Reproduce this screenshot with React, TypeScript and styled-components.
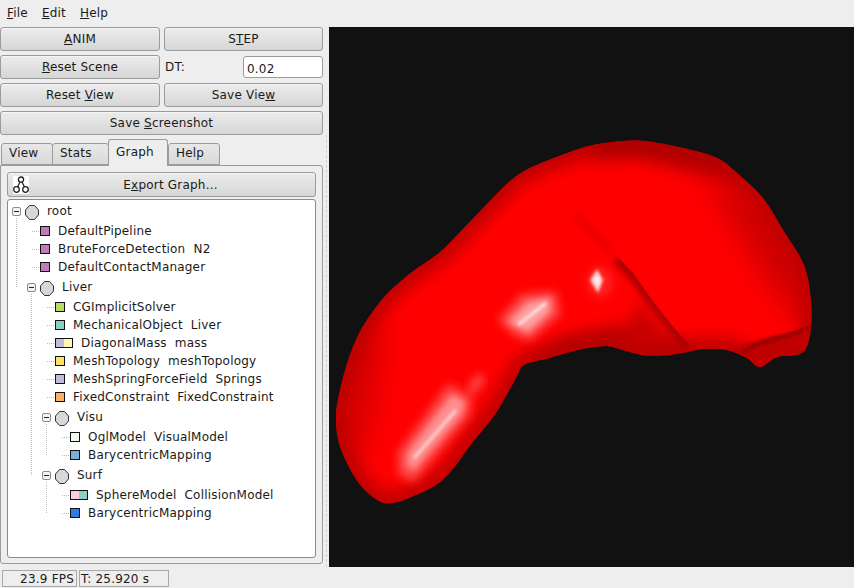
import React from 'react';
import styled, { createGlobalStyle } from 'styled-components';

const GlobalStyle = createGlobalStyle`
    html, body {
        margin: 0;
        padding: 0;
        background-color: #eeeeee;
    }
    body {
        font-family: "DejaVu Sans", sans-serif;
        font-size: 12px;
        letter-spacing: 0.2px;
        color: #1a1a1a;
    }
`;

const Window = styled.div`
    width: 854px;
    height: 588px;
    display: flex;
    flex-direction: column;
    overflow: hidden;
`;

const MenuBar = styled.div`
    height: 27px;
    display: flex;
    gap: 14px;
    padding: 6px 0 0 7px;
    box-sizing: border-box;
    line-height: 15px;
`;

const Main = styled.div`
    height: 540px;
    display: flex;
`;

const SidePanel = styled.div`
    width: 323px;
    display: flex;
    flex-direction: column;
`;

const Splitter = styled.div`
    width: 6px;
    margin-top: 108px;
    position: relative;
    &::before {
        content: '';
        position: absolute;
        left: 3px;
        top: 0;
        bottom: 0;
        border-left: 1px dashed #d0d0d0;
    }
`;

const Controls = styled.div`
    display: grid;
    grid-template-columns: 160px 159px;
    grid-auto-rows: 24px;
    gap: 4px;
`;

const Button = styled.button<{ $wide?: boolean }>`
    ${p => (p.$wide ? 'grid-column: 1 / span 2;' : '')}
    margin: 0;
    padding: 0;
    font: inherit;
    letter-spacing: inherit;
    color: inherit;
    border: 1px solid #9b9b9b;
    border-radius: 3px;
    background: linear-gradient(#ececec, #d6d6d6);
    box-shadow: inset 0 1px 0 #f6f6f6;
    white-space: pre;
`;

const DtRow = styled.div`
    display: flex;
    align-items: center;
    justify-content: space-between;
    padding-left: 1px;
`;

const DtInput = styled.div`
    width: 80px;
    height: 22px;
    box-sizing: border-box;
    border: 1px solid #9b9b9b;
    border-radius: 3px;
    background: #fff;
    padding: 5px 3px 0;
    line-height: 15px;
`;

const TabBar = styled.div`
    height: 26px;
    margin-top: 4px;
    padding-left: 2px;
    display: flex;
    align-items: flex-end;
    position: relative;
    z-index: 1;
`;

const Tab = styled.div<{ $active?: boolean; $width: number }>`
    width: ${p => p.$width}px;
    height: ${p => (p.$active ? 27 : 22)}px;
    box-sizing: border-box;
    border: 1px solid #9b9b9b;
    border-bottom: ${p => (p.$active ? 'none' : '1px solid #9b9b9b')};
    border-radius: 3px 3px 0 0;
    margin-left: -1px;
    margin-right: ${p => (p.$active ? '1px' : '0')};
    background: ${p => (p.$active ? '#eeeeee' : 'linear-gradient(#e8e8e8, #d9d9d9)')};
    margin-bottom: ${p => (p.$active ? '-1px' : '0')};
    padding: ${p => (p.$active ? '5px' : '2px')} 0 0 7px;
    line-height: 15px;
`;

const TabPage = styled.div`
    height: 399px;
    box-sizing: border-box;
    border: 1px solid #9b9b9b;
    border-radius: 0 3px 3px 3px;
    padding: 6px 6px 5px;
    display: flex;
    flex-direction: column;
    gap: 2px;
`;

const ExportButton = styled(Button)`
    height: 25px;
    padding-left: 18px;
    position: relative;
    flex: none;
`;

const GraphIcon = styled.svg`
    position: absolute;
    left: 5px;
    top: 3px;
`;

const Tree = styled.div`
    flex: 1;
    border: 1px solid #8a8a8a;
    border-radius: 3px;
    background: #fff;
    padding: 0 0 0 4px;
    overflow: hidden;
`;

const NodeRow = styled.div`
    height: 22px;
    display: flex;
    align-items: center;
    position: relative;
    white-space: pre;
`;

const Toggle = styled.span`
    width: 9px;
    height: 9px;
    box-sizing: border-box;
    border: 1px solid #8c8c8c;
    border-radius: 2px;
    background: #f4f4f4;
    margin: 0 4px 0 0;
    position: relative;
    flex: none;
    &::after {
        content: '';
        position: absolute;
        left: 1px;
        right: 1px;
        top: 3px;
        height: 1px;
        background: #222;
    }
`;

const HexIcon = styled.svg`
    flex: none;
    margin: 3px 8px 0 0;
`;

const Branch = styled.div<{ $tail: number }>`
    padding-left: 15px;
    position: relative;
    &::before {
        content: '';
        position: absolute;
        left: 4px;
        top: -4px;
        bottom: ${p => p.$tail}px;
        border-left: 1px dotted #bbbbbb;
    }
`;

const LeafRow = styled.div`
    height: 18px;
    display: flex;
    align-items: center;
    padding-left: 13px;
    position: relative;
    white-space: pre;
    &::before {
        content: '';
        position: absolute;
        left: 5px;
        width: 7px;
        top: 9px;
        border-top: 1px dotted #bbbbbb;
    }
`;

const Swatch = styled.span<{ $wide: boolean }>`
    width: ${p => (p.$wide ? 18 : 10)}px;
    height: 10px;
    box-sizing: border-box;
    border: 1px solid #111;
    display: flex;
    flex: none;
    margin-right: 8px;
`;

const SwatchPart = styled.span<{ $color: string }>`
    flex: 1;
    background: ${p => p.$color};
`;

const Viewport = styled.div`
    flex: 1;
    background: #111111;
    overflow: hidden;
`;

const StatusBar = styled.div`
    flex: 1;
    display: flex;
    gap: 2px;
    padding: 3px 0 0 2px;
    align-items: flex-start;
`;

const StatusCell = styled.div<{ $width: number; $right?: boolean }>`
    width: ${p => p.$width}px;
    height: 17px;
    box-sizing: border-box;
    border: 1px solid #a8a8a8;
    line-height: 15px;
    padding: 1px 2px 1px 1px;
    text-align: ${p => (p.$right ? 'right' : 'left')};
`;

type TreeItem = {
    label: string;
    colors?: string[];
    children?: TreeItem[];
};

const PURPLE = '#c27bb8';

const scene: TreeItem = {
    label: 'root',
    children: [
        { label: 'DefaultPipeline', colors: [PURPLE] },
        { label: 'BruteForceDetection  N2', colors: [PURPLE] },
        { label: 'DefaultContactManager', colors: [PURPLE] },
        {
            label: 'Liver',
            children: [
                { label: 'CGImplicitSolver', colors: ['#b5dc64'] },
                { label: 'MechanicalObject  Liver', colors: ['#85d0c4'] },
                { label: 'DiagonalMass  mass', colors: ['#c3bbdc', '#fdf8b4'] },
                { label: 'MeshTopology  meshTopology', colors: ['#fde266'] },
                { label: 'MeshSpringForceField  Springs', colors: ['#c3bbdc'] },
                { label: 'FixedConstraint  FixedConstraint', colors: ['#fcb264'] },
                {
                    label: 'Visu',
                    children: [
                        { label: 'OglModel  VisualModel', colors: ['#f2fcec'] },
                        { label: 'BarycentricMapping', colors: ['#7db0d8'] },
                    ],
                },
                {
                    label: 'Surf',
                    children: [
                        { label: 'SphereModel  CollisionModel', colors: ['#fcccE4', '#8cd0c4'] },
                        { label: 'BarycentricMapping', colors: ['#2b7de0'] },
                    ],
                },
            ],
        },
    ],
};

const subtreeHeight = (item: TreeItem): number =>
    item.children ? 22 + item.children.reduce((sum, c) => sum + subtreeHeight(c), 0) : 18;

const TreeEntry = ({ item }: { item: TreeItem }) => {
    if (!item.children) {
        const colors = item.colors || [];
        return (
            <LeafRow>
                <Swatch $wide={colors.length > 1}>
                    {colors.map(c => (
                        <SwatchPart key={c} $color={c} />
                    ))}
                </Swatch>
                <span>{item.label}</span>
            </LeafRow>
        );
    }
    const last = item.children[item.children.length - 1];
    const tail = last.children ? subtreeHeight(last) - 11 : 9;
    return (
        <>
            <NodeRow>
                <Toggle />
                <HexIcon width="14" height="15" viewBox="0 0 14 15">
                    <path d="M4.5 0.5 H9.5 L13.5 5 V10 L9.5 14.5 H4.5 L0.5 10 V5 Z" fill="#d8d8d8" stroke="#333" strokeWidth="1" />
                </HexIcon>
                <span>{item.label}</span>
            </NodeRow>
            <Branch $tail={tail}>
                {item.children.map((c, i) => (
                    <TreeEntry key={i} item={c} />
                ))}
            </Branch>
        </>
    );
};

// outline of the mesh, traced from the render
const outline: [number, number][] = [
    [526, 170], [549, 160], [570, 152], [589, 146], [613, 142], [643, 141], [683, 148], [717, 158], [737, 173],
    [763, 198], [783, 230], [803, 263], [810, 293], [811, 327], [803, 352], [777, 357], [760, 367], [747, 358],
    [727, 350], [703, 349], [687, 352], [667, 355], [643, 355], [623, 350], [607, 346], [587, 348], [570, 352],
    [549, 358], [524, 365], [516, 378], [496, 413], [472, 443], [452, 470], [436, 485], [409, 498], [391, 503],
    [379, 501], [362, 487], [349, 467], [339, 443], [336, 420], [338, 400], [346, 367], [356, 340], [367, 320],
    [386, 295], [412, 272], [439, 253], [462, 230], [489, 202], [509, 182],
];

const smoothPath = (pts: [number, number][]) => {
    const n = pts.length;
    let d = `M${pts[0][0]} ${pts[0][1]}`;
    for (let i = 0; i < n; i++) {
        const p0 = pts[(i - 1 + n) % n];
        const p1 = pts[i];
        const p2 = pts[(i + 1) % n];
        const p3 = pts[(i + 2) % n];
        const c1x = p1[0] + (p2[0] - p0[0]) / 6;
        const c1y = p1[1] + (p2[1] - p0[1]) / 6;
        const c2x = p2[0] - (p3[0] - p1[0]) / 6;
        const c2y = p2[1] - (p3[1] - p1[1]) / 6;
        d += ` C${c1x.toFixed(1)} ${c1y.toFixed(1)} ${c2x.toFixed(1)} ${c2y.toFixed(1)} ${p2[0]} ${p2[1]}`;
    }
    return d + ' Z';
};

const LIVER = smoothPath(outline);
const FOLD = 'M604 255 L613 252 L633 273 L650 297 L670 323 L690 346';

const LiverDrawing = () => (
    <svg width="525" height="540" viewBox="329 27 525 540">
        <defs>
            <filter id="blur14" x="-30%" y="-30%" width="160%" height="160%">
                <feGaussianBlur stdDeviation="14" />
            </filter>
            <filter id="blur8" x="-50%" y="-50%" width="200%" height="200%">
                <feGaussianBlur stdDeviation="8" />
            </filter>
            <filter id="blur5" x="-50%" y="-50%" width="200%" height="200%">
                <feGaussianBlur stdDeviation="5" />
            </filter>
            <filter id="blur3" x="-50%" y="-50%" width="200%" height="200%">
                <feGaussianBlur stdDeviation="3" />
            </filter>
            <filter id="blur1" x="-50%" y="-50%" width="200%" height="200%">
                <feGaussianBlur stdDeviation="1.5" />
            </filter>
            <clipPath id="liverClip">
                <path d={LIVER} />
            </clipPath>
            <clipPath id="lobeClip">
                <path d={`${FOLD} L690 380 L560 380 L560 255 Z`} />
            </clipPath>
            <clipPath id="flapClip">
                <path d="M740 352 C755 338 790 335 815 322 L815 375 L740 375 Z" />
            </clipPath>
        </defs>
        <g clipPath="url(#liverClip)">
            <rect x="329" y="27" width="525" height="540" fill="#ff0000" />
            {/* rim shading */}
            <path d={LIVER} fill="none" stroke="#b00000" strokeWidth="22" filter="url(#blur8)" opacity="0.85" />
            <path d="M600 130 L690 140 L745 180 L700 175 L640 160 L590 160 Z" fill="#a00000" filter="url(#blur8)" opacity="0.65" />
            <path d="M700 165 L760 200 L805 270 L812 330 L775 290 L735 225 Z" fill="#b80000" filter="url(#blur14)" opacity="0.75" />
            <path d="M350 350 L385 320 L372 410 L360 460 L340 450 Z" fill="#b00000" filter="url(#blur14)" opacity="0.6" />
            {/* underside */}
            <path d="M525 362 L560 338 L620 325 L690 345 L690 360 L560 360 Z" fill="#b80000" filter="url(#blur8)" />
            <path d="M575 215 C590 230 600 240 612 250" stroke="#ea0000" strokeWidth="8" fill="none" filter="url(#blur3)" />
            {/* fold */}
            <g clipPath="url(#lobeClip)">
                <path d="M618 258 L638 280 L655 304 L675 330 L690 346" stroke="#a80000" strokeWidth="12" fill="none" filter="url(#blur3)" />
                <path d="M640 300 L670 345 L620 345 Z" fill="#c80000" filter="url(#blur8)" />
            </g>
            {/* flap at the right end */}
            <path d="M725 350 L760 367 L803 352 L811 330 L770 336 Z" fill="#c00000" filter="url(#blur1)" />
            <g clipPath="url(#flapClip)">
                <path d="M742 352 C755 340 790 338 813 325" stroke="#a00000" strokeWidth="6" fill="none" filter="url(#blur1)" />
            </g>
            {/* highlights */}
            <path d="M498 320 L522 294 L556 292 L560 314 L530 340 L516 336 Z" fill="#ff5050" filter="url(#blur5)" />
            <path d="M508 322 L528 302 L550 298 L550 312 L528 332 Z" fill="#ffa0a0" filter="url(#blur3)" />
            <path d="M518 325 L546 303" stroke="#ffe0e0" strokeWidth="3" fill="none" filter="url(#blur1)" />
            <ellipse cx="600" cy="282" rx="13" ry="15" fill="#ff4040" filter="url(#blur5)" opacity="0.55" />
            <path d="M590 280 L597 269 L603 280 L598 293 Z" fill="#ffc8c8" filter="url(#blur1)" />
            <path d="M594 280 L597 274 L600 280 L598 287 Z" fill="#fff0f0" filter="url(#blur1)" />
            <path d="M448 384 L472 396 L470 415 L414 482 L398 474 L398 452 L426 414 Z" fill="#ff4848" filter="url(#blur5)" />
            <path d="M452 394 L465 402 L462 414 L414 470 L406 464 L408 452 L432 420 Z" fill="#ff9090" filter="url(#blur3)" />
            <path d="M456 410 L414 458" stroke="#ffd0d0" strokeWidth="3" fill="none" filter="url(#blur1)" />
            <path d="M482 376 L470 392" stroke="#ff5050" strokeWidth="9" fill="none" filter="url(#blur5)" />
        </g>
    </svg>
);

const App = () => {
    return (
        <Window>
            <GlobalStyle />
            <MenuBar>
                <span><u>F</u>ile</span>
                <span><u>E</u>dit</span>
                <span><u>H</u>elp</span>
            </MenuBar>
            <Main>
                <SidePanel>
                    <Controls>
                        <Button><u>A</u>NIM</Button>
                        <Button>S<u>T</u>EP</Button>
                        <Button><u>R</u>eset Scene</Button>
                        <DtRow>
                            <span>DT:</span>
                            <DtInput>0.02</DtInput>
                        </DtRow>
                        <Button>Reset <u>V</u>iew</Button>
                        <Button>Save Vie<u>w</u></Button>
                        <Button $wide>Save <u>S</u>creenshot</Button>
                    </Controls>
                    <TabBar>
                        <Tab $width={52}>View</Tab>
                        <Tab $width={57}>Stats</Tab>
                        <Tab $active $width={60}>Graph</Tab>
                        <Tab $width={52}>Help</Tab>
                    </TabBar>
                    <TabPage>
                        <ExportButton>
                            <GraphIcon width="16" height="18" viewBox="0 0 16 18">
                                <rect width="16" height="18" fill="#fff" />
                                <g fill="none" stroke="#222" strokeWidth="1.3">
                                    <circle cx="8" cy="3.6" r="2.6" />
                                    <circle cx="3.5" cy="13.5" r="2.8" />
                                    <circle cx="12.5" cy="13.5" r="2.8" />
                                    <path d="M7 6 L4.5 11 M9 6 L11.5 11" />
                                </g>
                            </GraphIcon>
                            E<u>x</u>port Graph...
                        </ExportButton>
                        <Tree>
                            <TreeEntry item={scene} />
                        </Tree>
                    </TabPage>
                </SidePanel>
                <Splitter />
                <Viewport>
                    <LiverDrawing />
                </Viewport>
            </Main>
            <StatusBar>
                <StatusCell $width={75} $right>23.9 FPS</StatusCell>
                <StatusCell $width={90}>T: 25.920 s</StatusCell>
            </StatusBar>
        </Window>
    );
};

export default App;
